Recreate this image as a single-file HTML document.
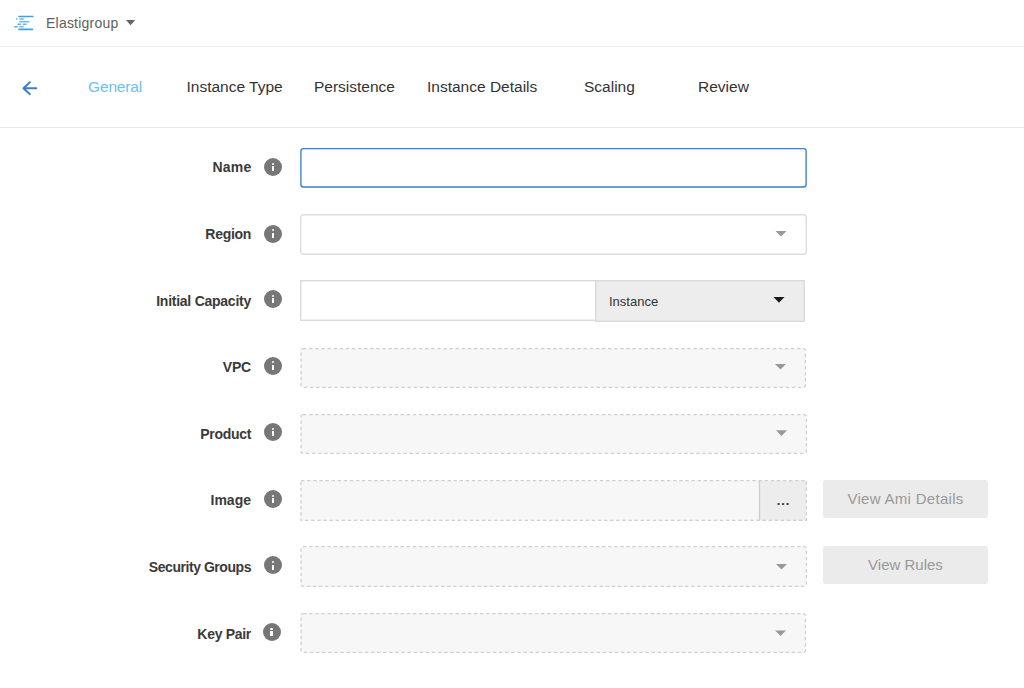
<!DOCTYPE html>
<html><head><meta charset="utf-8">
<style>
*{box-sizing:border-box;margin:0;padding:0}
html,body{width:1024px;height:688px;overflow:hidden;background:#fff;font-family:"Liberation Sans",sans-serif}
.abs{position:absolute}
#top{position:absolute;left:0;top:0;width:1024px;height:47px;border-bottom:1px solid #efefef}
#brand{position:absolute;left:46px;top:14px;font-size:14px;color:#5f5f5f;line-height:18px;letter-spacing:0.22px}
#tabs{position:absolute;left:0;top:47px;width:1024px;height:81px;border-bottom:1px solid #e8e8e8}
.tab{position:absolute;top:31px;font-size:15.5px;line-height:18px;color:#333;white-space:nowrap}
.lbl{position:absolute;right:773px;font-size:14px;font-weight:bold;color:#3a3a3a;line-height:16px;white-space:nowrap;text-align:right}
.info{position:absolute;left:264px;width:18px;height:18px;border-radius:50%;background:#777}
.info:before{content:"";position:absolute;left:7.8px;top:4.6px;width:2.4px;height:2px;border-radius:1px;background:#fff}
.info:after{content:"";position:absolute;left:7.8px;top:8.3px;width:2.4px;height:5.2px;background:#fff}
.btn{position:absolute;left:823px;width:165px;height:38px;background:#ebebeb;border-radius:3px;color:#999;font-size:15px;line-height:38px;text-align:center;letter-spacing:0.3px}
svg.box{position:absolute;overflow:visible}
</style></head>
<body>
<div id="top">
  <svg class="abs" style="left:14px;top:15px" width="22" height="16" viewBox="0 0 22 16">
    <g stroke-width="1.6" stroke-linecap="round">
      <line x1="5" y1="1.5" x2="18.8" y2="1.5" stroke="#3ba2e0"/>
      <line x1="2.8" y1="4" x2="2.9" y2="4" stroke="#4aaee6"/>
      <line x1="6" y1="4" x2="9.2" y2="4" stroke="#62bdea"/>
      <line x1="5.7" y1="6.7" x2="14.9" y2="6.7" stroke="#6cc3ee"/>
      <line x1="4.1" y1="9.3" x2="6.3" y2="9.3" stroke="#55b3e8"/>
      <line x1="9.2" y1="9.3" x2="12.1" y2="9.3" stroke="#62bdea"/>
      <line x1="0.8" y1="11.7" x2="3.1" y2="11.7" stroke="#4aaee6"/>
      <line x1="6" y1="11.7" x2="9.2" y2="11.7" stroke="#6cc3ee"/>
      <line x1="5" y1="14.4" x2="18.4" y2="14.4" stroke="#3ba2e0"/>
    </g>
  </svg>
  <div id="brand">Elastigroup</div>
  <svg class="abs" style="left:126px;top:20px" width="10" height="6" viewBox="0 0 10 6"><path d="M0 0H9.2L4.6 5.2Z" fill="#666"/></svg>
</div>
<div id="tabs">
  <svg class="abs" style="left:21px;top:33px" width="17" height="16" viewBox="0 0 17 16">
    <path d="M15.3 8.3H2.6M8.9 2.2L2.4 8.3 8.9 14.2" fill="none" stroke="#3b7dcb" stroke-width="1.9" stroke-linecap="round" stroke-linejoin="round"/>
  </svg>
  <div class="tab" style="left:88px;color:#6ec0f2;letter-spacing:-0.15px">General</div>
  <div class="tab" style="left:186.5px">Instance Type</div>
  <div class="tab" style="left:314px">Persistence</div>
  <div class="tab" style="left:427px">Instance Details</div>
  <div class="tab" style="left:584px">Scaling</div>
  <div class="tab" style="left:698px">Review</div>
</div>

<!-- Name -->
<div class="lbl" style="top:159px;letter-spacing:0.2px;right:772.6px">Name</div>
<div class="info" style="top:158px"></div>
<svg class="box" style="left:300px;top:148px" width="507" height="40"><rect x="0.9" y="0.6" width="505.2" height="38.4" rx="2.5" fill="#fff" stroke="#3a7fd0" stroke-width="1.35"/></svg>

<!-- Region -->
<div class="lbl" style="top:226px;letter-spacing:-0.3px">Region</div>
<div class="info" style="top:224.6px"></div>
<svg class="box" style="left:300px;top:214px" width="507" height="41"><rect x="0.7" y="0.7" width="505.6" height="39.6" rx="3" fill="#fff" stroke="#dcdde0" stroke-width="1.4"/><path d="M475.5 17H486.5L481 22.6Z" fill="#999"/></svg>

<!-- Initial Capacity -->
<div class="lbl" style="top:293px;letter-spacing:-0.25px">Initial Capacity</div>
<div class="info" style="top:290px"></div>
<svg class="box" style="left:300px;top:280px" width="505" height="42">
  <rect x="0.7" y="0.7" width="295" height="39.6" fill="#fff" stroke="#d9dadd" stroke-width="1.4"/>
  <rect x="295.7" y="0.7" width="208.6" height="40.6" fill="#ededed" stroke="#d9dadd" stroke-width="1.4"/>
  <path d="M473.5 17H484.5L479 22.7Z" fill="#1a1a1a"/>
</svg>
<div class="abs" style="left:609px;top:294px;font-size:13px;line-height:16px;color:#333">Instance</div>

<!-- VPC -->
<div class="lbl" style="top:359px;letter-spacing:-0.2px">VPC</div>
<div class="info" style="top:356.6px"></div>
<svg class="box" style="left:300px;top:348px" width="506" height="40"><rect x="1.0" y="0.6" width="504.4" height="38.8" rx="2" fill="#f7f7f7" stroke="#d0d0d0" stroke-width="1.3" stroke-dasharray="3.5 2.6"/><path d="M475 16H486L480.5 21.6Z" fill="#999"/></svg>

<!-- Product -->
<div class="lbl" style="top:426px;letter-spacing:-0.3px">Product</div>
<div class="info" style="top:423px"></div>
<svg class="box" style="left:300px;top:414px" width="507" height="40"><rect x="1.0" y="0.6" width="505.4" height="38.8" rx="2" fill="#f7f7f7" stroke="#d0d0d0" stroke-width="1.3" stroke-dasharray="3.5 2.6"/><path d="M476 16.3H487L481.5 21.9Z" fill="#999"/></svg>

<!-- Image -->
<div class="lbl" style="top:492px;letter-spacing:0px">Image</div>
<div class="info" style="top:490px"></div>
<svg class="box" style="left:300px;top:480px" width="507" height="41">
  <rect x="459" y="0.6" width="47.4" height="39.8" fill="#ededed"/>
  <rect x="0.6" y="0.6" width="458.4" height="39.8" fill="#f7f7f7"/>
  <rect x="1.0" y="0.6" width="505.4" height="39.8" fill="none" stroke="#d0d0d0" stroke-width="1.3" stroke-dasharray="3.5 2.6"/>
  <rect x="458.8" y="0.6" width="1.4" height="39.8" fill="#cfcfcf"/>
  <rect x="477.5" y="23" width="2.2" height="2.1" rx="0.6" fill="#444"/>
  <rect x="482" y="23" width="2.2" height="2.1" rx="0.6" fill="#444"/>
  <rect x="486.5" y="23" width="2.2" height="2.1" rx="0.6" fill="#444"/>
</svg>
<div class="btn" style="top:480px">View Ami Details</div>

<!-- Security Groups -->
<div class="lbl" style="top:559px;letter-spacing:-0.45px">Security Groups</div>
<div class="info" style="top:556.4px"></div>
<svg class="box" style="left:300px;top:546px" width="507" height="41"><rect x="1.0" y="0.6" width="505.4" height="39.8" rx="2" fill="#f7f7f7" stroke="#d0d0d0" stroke-width="1.3" stroke-dasharray="3.5 2.6"/><path d="M476 18H487L481.5 23.6Z" fill="#999"/></svg>
<div class="btn" style="top:546px;letter-spacing:0">View Rules</div>

<!-- Key Pair -->
<div class="lbl" style="top:626px;letter-spacing:-0.3px">Key Pair</div>
<div class="info" style="top:623px;left:262.5px"></div>
<svg class="box" style="left:300px;top:613px" width="506" height="40"><rect x="1.0" y="0.6" width="504.4" height="38.8" rx="2" fill="#f7f7f7" stroke="#d0d0d0" stroke-width="1.3" stroke-dasharray="3.5 2.6"/><path d="M475 17.4H486L480.5 23Z" fill="#999"/></svg>
</body></html>
